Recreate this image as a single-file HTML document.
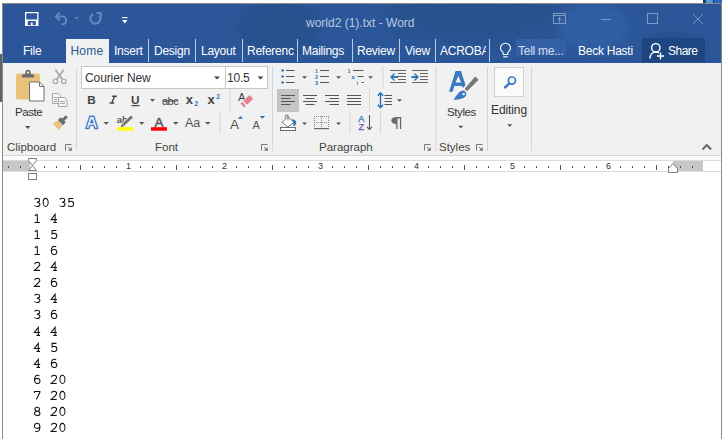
<!DOCTYPE html>
<html><head><meta charset="utf-8">
<style>
*{margin:0;padding:0;box-sizing:border-box}
html,body{width:722px;height:439px;overflow:hidden;background:#fff;font-family:"Liberation Sans",sans-serif}
.a{position:absolute}
.t{position:absolute;white-space:nowrap;line-height:1}
.tab{position:absolute;top:43.5px;color:#fff;font-size:12px;letter-spacing:-0.25px;white-space:nowrap;line-height:14px}
.sep{position:absolute;top:39px;width:1px;height:23px;background:#bccae2}
.gl{position:absolute;top:141px;font-size:11.5px;color:#444;line-height:13px;white-space:nowrap}
.lbl{position:absolute;font-size:12.5px;color:#333;line-height:14px;white-space:nowrap}
.rn{position:absolute;top:162px;font-size:9px;color:#333;line-height:9px}
.doc{position:absolute;left:34px;font-family:"Liberation Mono",monospace;font-size:14px;color:#000;line-height:16px;white-space:pre}
svg{position:absolute;left:0;top:0}
</style></head>
<body>
<!-- top background strip -->
<div class="a" style="left:703px;top:0;width:19px;height:3px;background:#2a6bb8"></div>
<div class="a" style="left:703px;top:0;width:3px;height:3px;background:#1a3a5a"></div>
<div class="a" style="left:706px;top:0;width:7px;height:3px;background:#5a9ad8"></div>
<div class="a" style="left:713px;top:0;width:1px;height:3px;background:#0f3a70"></div>
<!-- left dark strip -->
<div class="a" style="left:0;top:54px;width:2px;height:48px;background:#56646e"></div>
<!-- window frame -->
<div class="a" style="left:2px;top:3px;width:720px;height:436px;background:#8a8a8a"></div>
<!-- title bar -->
<div class="a" style="left:3px;top:4px;width:718px;height:59px;background:#2b579a;overflow:hidden">
  <div class="a" style="left:234px;top:-4px;width:84px;height:56px;border-radius:50%;background:#27518f;filter:blur(3px)"></div>
  <div class="a" style="left:380px;top:-20px;width:180px;height:60px;border-radius:50%;background:#28528f;filter:blur(8px)"></div>
  <div class="a" style="left:555px;top:0px;width:70px;height:45px;border-radius:50%;background:#3060a3;filter:blur(5px)"></div>
  <div class="a" style="left:640px;top:28px;width:60px;height:40px;border-radius:50%;background:#264e8c;filter:blur(4px)"></div>
</div>
<!-- ribbon -->
<div class="a" style="left:3px;top:63px;width:718px;height:92px;background:#f1f1f1"></div>
<div class="a" style="left:3px;top:155px;width:718px;height:1px;background:#d5d5d5"></div>
<div class="a" style="left:3px;top:156px;width:718px;height:4px;background:#fdfdfd"></div>
<!-- document area -->
<div class="a" style="left:3px;top:160px;width:718px;height:279px;background:#fff"></div>
<!-- ruler -->
<div class="a" style="left:3px;top:160px;width:718px;height:1px;background:#dcdcdc"></div>
<div class="a" style="left:3px;top:171px;width:718px;height:1px;background:#dcdcdc"></div>
<div class="a" style="left:3px;top:161px;width:27px;height:10px;background:#c6c6c6"></div>
<div class="a" style="left:673px;top:161px;width:30px;height:10px;background:#c6c6c6"></div>

<!-- title bar content -->
<div class="t" style="left:306px;top:17px;font-size:12px;color:#bac8df">world2 (1).txt - Word</div>

<!-- tabs -->
<div class="a" style="left:66px;top:39px;width:43px;height:24px;background:#f1f1f1"></div>
<div class="tab" style="left:23px">File</div>
<div class="tab" style="left:70.5px;color:#2b579a;letter-spacing:0.2px">Home</div>
<div class="tab" style="left:114px">Insert</div>
<div class="sep" style="left:148px"></div>
<div class="tab" style="left:154px">Design</div>
<div class="sep" style="left:195px"></div>
<div class="tab" style="left:201px">Layout</div>
<div class="sep" style="left:242px"></div>
<div class="tab" style="left:247px">Referenc</div>
<div class="sep" style="left:297px"></div>
<div class="tab" style="left:302px">Mailings</div>
<div class="sep" style="left:352px"></div>
<div class="tab" style="left:357px">Review</div>
<div class="sep" style="left:399px"></div>
<div class="tab" style="left:405px">View</div>
<div class="sep" style="left:435px"></div>
<div class="tab" style="left:440px;width:46px;overflow:hidden">ACROBAT</div>
<div class="sep" style="left:489px"></div>
<div class="a" style="left:516px;top:39px;width:50px;height:16px;background:#3461a6"></div>
<div class="tab" style="left:518px;color:#d5dff0">Tell me...</div>
<div class="tab" style="left:578px">Beck Hasti</div>
<div class="a" style="left:642px;top:38px;width:63px;height:24px;background:#1d4683"></div>
<div class="tab" style="left:668px;letter-spacing:-0.5px">Share</div>

<!-- ribbon labels -->
<div class="lbl" style="left:15px;top:105px;font-size:11.5px;letter-spacing:-0.45px">Paste</div>
<div class="lbl" style="left:447px;top:105px;font-size:11.5px;letter-spacing:-0.4px">Styles</div>
<div class="lbl" style="left:491px;top:103px;font-size:12px;letter-spacing:-0.1px">Editing</div>

<!-- group labels -->
<div class="gl" style="left:7px">Clipboard</div>
<div class="gl" style="left:155px">Font</div>
<div class="gl" style="left:319px">Paragraph</div>
<div class="gl" style="left:439px">Styles</div>

<!-- ruler numbers -->
<div class="rn" style="left:126px">1</div>
<div class="rn" style="left:222px">2</div>
<div class="rn" style="left:318px">3</div>
<div class="rn" style="left:414px">4</div>
<div class="rn" style="left:510px">5</div>
<div class="rn" style="left:606px">6</div>

<svg id="icons" width="722" height="439" viewBox="0 0 722 439">
<!-- QAT -->
<path fill="#fff" fill-rule="evenodd" d="M25 12h13.5v14h-13.5z M26.3 13.3h10.9v6.2h-10.9z M27.8 21h8v4.2h-8z"/>
<rect x="30.8" y="22.5" width="1.9" height="2.8" fill="#fff"/>
<g fill="none" stroke="#6586bd" stroke-width="2.1">
<path d="M56.5 16.5h5.8a3.9 3.9 0 0 1 0 7.8h-0.8"/>
<path d="M59.8 12.6l-3.9 3.9 3.9 3.9"/>
<path d="M99.6 16A5 5 0 1 1 93.2 14.1"/>
<path d="M96.4 13H100.8V17.4"/>
</g>
<path fill="#6586bd" d="M74 17.3h5l-2.5 2.2z"/>
<rect x="122" y="17" width="5.5" height="1.2" fill="#fff"/>
<path fill="#fff" d="M122 20h5.5l-2.75 3.5z"/>
<!-- window controls -->
<g fill="none" stroke="#8098c4" stroke-width="1">
<rect x="553.5" y="13.5" width="12" height="10"/>
<path d="M553.5 15.5h12"/>
<path d="M559.5 22.5v-5M557.5 19.5l2-2 2 2"/>
<path d="M601 19.5h10"/>
<rect x="647.5" y="13.5" width="10" height="10"/>
<path d="M693 14l10 10M703 14l-10 10"/>
</g>
<!-- tell me bulb -->
<g fill="none" stroke="#fff" stroke-width="1.1">
<path d="M503.2 54.5v-1.5c0-1.3-2.7-2.4-2.7-4.8a5 5 0 0 1 10 0c0 2.4-2.7 3.5-2.7 4.8v1.5z"/>
<path d="M503.3 56.8h4.4"/>
</g>
<!-- share icon -->
<g fill="none" stroke="#fff" stroke-width="1.4">
<circle cx="655.8" cy="47.8" r="4.2"/>
<path d="M650 58.5c0-4 2.5-6.5 6-6.5 1.2 0 2.2 .3 3 .8"/>
<path d="M660.5 52.5v7M657 56h7"/>
</g>

<!-- Clipboard group -->
<rect x="16" y="73.5" width="24" height="26" rx="2" fill="#e8c27b"/>
<path fill="#6b6b6b" d="M21.5 77.5l1-3.2h11l1 3.2z M25.3 74.5v-2a2.7 2.7 0 0 1 5.4 0v2z"/>
<circle cx="28" cy="72.6" r="1.1" fill="#f1f1f1"/>
<path fill="#fff" stroke="#707070" stroke-width="1" d="M29.5 82h10l4.5 4.5v14.5h-14.5z"/>
<path fill="none" stroke="#707070" stroke-width="1" d="M39.5 82v4.5h4.5"/>
<path fill="#555" d="M25 126h5.5l-2.75 3z"/>
<g fill="none" stroke="#a6a6a6" stroke-width="1.2">
<circle cx="55.4" cy="81.3" r="2.3"/>
<circle cx="63.8" cy="81.3" r="2.3"/>
</g>
<path fill="none" stroke="#a6a6a6" stroke-width="1.7" d="M56.8 79.3l7-9.6M62.4 79.3l-7-9.6"/>
<g fill="#f6f6f6" stroke="#a6a6a6" stroke-width="1">
<path d="M52.5 93.5h6l2 2v8h-8z"/>
<path d="M58.5 97.5h6l2.5 2.5v6.5h-8.5z"/>
</g>
<g stroke="#a6a6a6" stroke-width="1">
<path d="M54 97.5h4M54 99.5h3M54 101.5h3M60 101.5h5M60 103.5h5"/>
</g>
<path fill="#e8c27b" d="M57.84 120.49 L62.51 125.16 L59.18 130.32 L52.68 123.82z"/>
<path fill="#6b6b6b" d="M57.84 120.07 L60.67 117.24 L65.76 122.33 L62.93 125.16z M61.8 119.08 L65.69 115.19 L67.81 117.31 L63.92 121.2z"/>
<rect x="76" y="68" width="1" height="82" fill="#d6d6d6"/>

<!-- Font group -->
<rect x="81.5" y="66.5" width="186" height="22" fill="#fff" stroke="#c6c6c6"/>
<rect x="225" y="67" width="1" height="21" fill="#c6c6c6"/>
<path fill="#444" d="M214 76.5h6l-3 3z M257.5 76.5h6l-3 3z"/>
<g font-family="Liberation Sans" fill="#444">
<text x="87.3" y="103.6" font-size="11.8" font-weight="bold">B</text>
<path fill="none" stroke="#444" stroke-width="1.4" d="M112.2 96.3h4.6M109.6 103h4.6M114.6 96.3l-2.8 6.7"/>
<text x="131" y="103.6" font-size="11.8" font-weight="bold">U</text>
<text x="162" y="104.5" font-size="11" letter-spacing="-0.5">abc</text>
<text x="185.8" y="104.2" font-size="13" font-weight="bold">x</text>
<text x="207.6" y="104.2" font-size="13" font-weight="bold">x</text>
</g>
<rect x="131.5" y="105" width="8" height="1.2" fill="#444"/>
<rect x="162" y="100.5" width="16" height="1" fill="#444"/>
<text x="194.5" y="106.3" font-size="6.5" font-weight="bold" fill="#2e75b6" font-family="Liberation Sans">2</text>
<text x="216.3" y="98.5" font-size="6.5" font-weight="bold" fill="#2e75b6" font-family="Liberation Sans">2</text>
<path fill="#555" d="M150 99h5l-2.5 2.8z"/>
<rect x="229.5" y="89" width="1" height="22" fill="#d6d6d6"/>
<text x="238.3" y="101.3" font-size="10.5" fill="#333" font-family="Liberation Sans">A</text>
<path fill="#e57f93" stroke="#f1f1f1" stroke-width="0.6" d="M243.10 100.75 L249.57 94.79 L253.50 99.05 L247.03 105.01z M240.21 103.42 L242.27 101.52 L246.19 105.78 L244.13 107.68z"/>
<!-- row 2 -->
<path fill="#eaf1fa" fill-rule="evenodd" stroke="#b9d2ee" stroke-width="2.6" stroke-linejoin="round" d="M89.8 116.4H93.8L97.6 128.4H94.8L93.8 125.2H89.8L88.8 128.4H86Z M91.8 119.6L90.5 122.8H93.1Z"/>
<path fill="#eaf1fa" fill-rule="evenodd" stroke="#3a77be" stroke-width="1.1" stroke-linejoin="round" d="M89.8 116.4H93.8L97.6 128.4H94.8L93.8 125.2H89.8L88.8 128.4H86Z M91.8 119.6L90.5 122.8H93.1Z"/>
<path fill="#555" d="M103.5 122h5.5l-2.75 2.8z M139 122h5.5l-2.75 2.8z M173 122h5.5l-2.75 2.8z M205 122h5.5l-2.75 2.8z"/>
<text x="116.8" y="122.6" font-size="9.5" font-weight="bold" fill="#555" font-family="Liberation Sans">ab</text>
<path fill="none" stroke="#f1f1f1" stroke-width="4" d="M123.5 124.5l8.5-8"/>
<path fill="none" stroke="#707070" stroke-width="2.6" d="M123.5 124.5l8.5-8"/>
<path fill="#707070" d="M120.8 127.2l1.2-3.6 2.6 2.4z"/>
<rect x="117" y="127.2" width="16" height="3.5" fill="#ffff00"/>
<text x="154.5" y="126.8" font-size="13.5" fill="#555" stroke="#555" stroke-width="0.5" font-family="Liberation Sans">A</text>
<rect x="151" y="127.2" width="16" height="3.5" fill="#ff0000"/>
<text x="185" y="127" font-size="12.5" fill="#555" font-family="Liberation Sans">Aa</text>
<rect x="219.5" y="112" width="1" height="22" fill="#d6d6d6"/>
<text x="230" y="128.7" font-size="13.5" fill="#555" font-family="Liberation Sans">A</text>
<path fill="#2e75b6" d="M237.8 118.7h5.2l-2.6-2.6z"/>
<text x="252.5" y="128.7" font-size="11" fill="#555" font-family="Liberation Sans">A</text>
<path fill="#2e75b6" d="M259.7 116h5.5l-2.75 2.8z"/>
<rect x="272" y="66" width="1" height="85" fill="#d6d6d6"/>

<!-- Paragraph group -->
<g fill="#2e75b6">
<circle cx="282.6" cy="70.5" r="1.3"/><circle cx="282.6" cy="76.5" r="1.3"/><circle cx="282.6" cy="82.5" r="1.3"/>
</g>
<g stroke="#555" stroke-width="1.1">
<path d="M286 70.5h8.5M286 76.5h8.5M286 82.5h8.5"/>
<path d="M320 70.5h9M320 76.5h9M320 82.5h9"/>
<path d="M353 70.5h10.5M357.5 76.5h6M361.5 82.5h2.3"/>
</g>
<g font-family="Liberation Sans" font-weight="bold" font-size="5.5" fill="#2e75b6">
<text x="315" y="72.5">1</text><text x="315" y="78.6">2</text><text x="315" y="84.6">3</text>
<text x="347.5" y="72.5">1</text><text x="351.5" y="78.6">a</text><text x="356.5" y="84.6">i</text>
</g>
<path fill="#555" d="M302 76.2h5l-2.5 2.5z M336 76.2h5l-2.5 2.5z M368.3 76.2h4.7l-2.35 2.5z"/>
<rect x="382.5" y="66" width="1" height="21" fill="#d6d6d6"/>
<g stroke="#666" stroke-width="1.1">
<path d="M390 70.5h16M398 73.5h8M398 76.5h8M398 79.5h8M390 82.5h16"/>
<path d="M412 70.5h16M420 73.5h8M420 76.5h8M420 79.5h8M412 82.5h16"/>
</g>
<path fill="#2e75b6" d="M390 77l3.5-3.5h2l-2.5 2.5h5v2h-5l2.5 2.5h-2z"/>
<path fill="#2e75b6" d="M419 77l-3.5-3.5h-2l2.5 2.5h-4.5v2h4.5l-2.5 2.5h2z"/>
<rect x="435.5" y="67" width="1" height="84" fill="#d6d6d6"/>
<!-- align row -->
<rect x="277" y="89" width="22" height="23" fill="#c5c5c5"/>
<g stroke="#555" stroke-width="1.2">
<path d="M281 95.5h14M281 98.5h9.5M281 101.5h14M281 104.5h9.5"/>
<path d="M303 95.5h14M305.5 98.5h9M303 101.5h14M305.5 104.5h9"/>
<path d="M325 95.5h14M329.5 98.5h9.5M325 101.5h14M329.5 104.5h9.5"/>
<path d="M347 95.5h14M347 98.5h14M347 101.5h14M347 104.5h14"/>
</g>
<rect x="369" y="89" width="1" height="22" fill="#d6d6d6"/>
<g stroke="#555" stroke-width="1.2">
<path d="M384.5 95.5h7.5M384.5 98.5h7.5M384.5 101.5h7.5M384.5 104.5h7.5"/>
</g>
<path fill="none" stroke="#2e75b6" stroke-width="1.4" d="M380.5 93v14.5M377.8 95.8l2.7-2.9 2.7 2.9M377.8 104.7l2.7 2.9 2.7-2.9"/>
<path fill="#555" d="M397 99.2h5l-2.5 2.5z"/>
<!-- row 3 -->
<path fill="#2e75b6" d="M292 119.2c2.5.2 4.3 1.6 4.3 3.6 0 1.5-1.2 3-2.8 3.8l-.3-4.5z"/>
<g fill="#fff" stroke="#6e6e6e" stroke-width="1">
<rect x="280.5" y="127.5" width="15" height="3"/>
<path d="M282.2 122.3l5.7-5.7 5.8 5.8-5.8 4.6z"/>
</g>
<path fill="none" stroke="#6e6e6e" stroke-width="1" d="M288 120.5v-4.3a1.3 1.3 0 0 0-2.6 0v1.5"/>
<path fill="#555" d="M302 122.5h5l-2.5 2.5z M336 122.5h5l-2.5 2.5z"/>
<path fill="#8a8a8a" d="M314 116h1v1h-1zM321 116h1v1h-1zM328 116h1v1h-1zM314 118h1v1h-1zM321 118h1v1h-1zM328 118h1v1h-1zM314 120h1v1h-1zM321 120h1v1h-1zM328 120h1v1h-1zM314 122h1v1h-1zM321 122h1v1h-1zM328 122h1v1h-1zM314 124h1v1h-1zM321 124h1v1h-1zM328 124h1v1h-1zM314 126h1v1h-1zM321 126h1v1h-1zM328 126h1v1h-1zM314 128h1v1h-1zM321 128h1v1h-1zM328 128h1v1h-1zM316 116h1v1h-1zM316 122h1v1h-1zM318 116h1v1h-1zM318 122h1v1h-1zM320 116h1v1h-1zM320 122h1v1h-1zM322 116h1v1h-1zM322 122h1v1h-1zM324 116h1v1h-1zM324 122h1v1h-1zM326 116h1v1h-1zM326 122h1v1h-1z"/>
<rect x="314" y="128" width="15" height="1.2" fill="#666"/>
<rect x="349.5" y="111.5" width="1" height="22" fill="#d6d6d6"/>
<text x="358.3" y="121.6" font-size="9.2" fill="#2e75b6" stroke="#2e75b6" stroke-width="0.25" font-family="Liberation Sans">A</text>
<text x="358.6" y="129.8" font-size="9.2" fill="#7a4fa8" stroke="#7a4fa8" stroke-width="0.25" font-family="Liberation Sans">Z</text>
<g fill="none" stroke="#555" stroke-width="1.1">
<path d="M369.5 115v14.3M366.9 126.8l2.6 2.7 2.6-2.7"/>
</g>
<rect x="380" y="111.5" width="1" height="22" fill="#d6d6d6"/>
<path fill="#6a6a6a" d="M396.2 117H401.2V129H399.9V118.4H397.5V129H396.2V124C393.5 124 391.3 122.5 391.3 120.5S393.5 117 396.2 117z"/>

<!-- launchers -->
<g fill="none" stroke="#777" stroke-width="1">
<path d="M65.5 150.5v-6h6M68 147l3.5 3.5"/>
<path d="M261.5 150.5v-6h6M264 147l3.5 3.5"/>
<path d="M424.5 150.5v-6h6M427 147l3.5 3.5"/>
<path d="M476.5 150.5v-6h6M479 147l3.5 3.5"/>
</g>
<path fill="#777" d="M71.8 147v3.8h-3.8z M267.8 147v3.8h-3.8z M430.8 147v3.8h-3.8z M482.8 147v3.8h-3.8z"/>

<!-- Styles group -->
<path fill="#3b78bf" fill-rule="evenodd" d="M455.6 71H461L467.6 91.8H464L462.16 86H454.4L452.6 91.8H449Z M458.3 76L461.05 82.5H455.55Z"/>
<path fill="#f1f1f1" d="M462.14 88.87 L474.96 74.89 L480.26 79.75 L467.44 93.73z"/>
<path fill="#777" d="M464.55 89.05 L475.17 76.44 L478.70 79.68 L467.05 91.35z"/>
<path fill="#3b78bf" d="M453.5 99.8C456 96.5 458.3 91.8 462 90.8A3.6 3.6 0 0 1 466.2 95.2C464.5 98.6 459 99.8 453.5 99.8z"/>
<ellipse cx="463.6" cy="94.2" rx="1.4" ry="1.1" fill="#e8f0fa"/>
<path fill="#555" d="M458.2 125.8h5l-2.5 2.6z"/>
<rect x="487" y="67" width="1" height="84" fill="#d6d6d6"/>
<!-- Editing -->
<rect x="494.5" y="67.5" width="29" height="29" fill="#fbfbfb" stroke="#cfcfcf"/>
<g fill="none" stroke="#3a77be">
<circle cx="511.9" cy="80.6" r="3.6" stroke-width="1.7"/>
<path d="M509.3 83.4l-4.2 4" stroke-width="2.4" stroke-linecap="round"/>
</g>
<path fill="#555" d="M507.2 124.3h5l-2.5 2.6z"/>
<rect x="531" y="67" width="1" height="84" fill="#d6d6d6"/>
<!-- collapse chevron -->
<path fill="none" stroke="#666" stroke-width="1.9" d="M702.5 149.5l4.3-4.5 4.3 4.5"/>

<!-- ruler ticks -->
<g fill="#555" id="ticks"><rect x="8" y="166" width="1" height="2"/><rect x="20" y="166" width="1" height="2"/><rect x="44" y="166" width="1" height="2"/><rect x="56" y="166" width="1" height="2"/><rect x="68" y="166" width="1" height="2"/><rect x="80" y="165" width="1" height="5"/><rect x="92" y="166" width="1" height="2"/><rect x="104" y="166" width="1" height="2"/><rect x="116" y="166" width="1" height="2"/><rect x="140" y="166" width="1" height="2"/><rect x="152" y="166" width="1" height="2"/><rect x="164" y="166" width="1" height="2"/><rect x="176" y="165" width="1" height="5"/><rect x="188" y="166" width="1" height="2"/><rect x="200" y="166" width="1" height="2"/><rect x="212" y="166" width="1" height="2"/><rect x="236" y="166" width="1" height="2"/><rect x="248" y="166" width="1" height="2"/><rect x="260" y="166" width="1" height="2"/><rect x="272" y="165" width="1" height="5"/><rect x="284" y="166" width="1" height="2"/><rect x="296" y="166" width="1" height="2"/><rect x="308" y="166" width="1" height="2"/><rect x="332" y="166" width="1" height="2"/><rect x="344" y="166" width="1" height="2"/><rect x="356" y="166" width="1" height="2"/><rect x="368" y="165" width="1" height="5"/><rect x="380" y="166" width="1" height="2"/><rect x="392" y="166" width="1" height="2"/><rect x="404" y="166" width="1" height="2"/><rect x="428" y="166" width="1" height="2"/><rect x="440" y="166" width="1" height="2"/><rect x="452" y="166" width="1" height="2"/><rect x="464" y="165" width="1" height="5"/><rect x="476" y="166" width="1" height="2"/><rect x="488" y="166" width="1" height="2"/><rect x="500" y="166" width="1" height="2"/><rect x="524" y="166" width="1" height="2"/><rect x="536" y="166" width="1" height="2"/><rect x="548" y="166" width="1" height="2"/><rect x="560" y="165" width="1" height="5"/><rect x="572" y="166" width="1" height="2"/><rect x="584" y="166" width="1" height="2"/><rect x="596" y="166" width="1" height="2"/><rect x="620" y="166" width="1" height="2"/><rect x="632" y="166" width="1" height="2"/><rect x="644" y="166" width="1" height="2"/><rect x="656" y="165" width="1" height="5"/><rect x="668" y="166" width="1" height="2"/><rect x="680" y="166" width="1" height="2"/><rect x="692" y="166" width="1" height="2"/></g>
<!-- indent markers -->
<g fill="#fff" stroke="#7f7f7f" stroke-width="1">
<path d="M28.5 158.5H36.5V160.5L32.5 165.5L36.5 170.5H28.5L32.5 165.5L28.5 160.5Z"/>
<rect x="28.5" y="173.5" width="8" height="6"/>
<path d="M668.5 172.5v-4l4.5-5 4.5 5v4z"/>
</g>
</svg>

<div class="t" style="left:85px;top:72px;font-size:12px;color:#333;letter-spacing:-0.1px">Courier New</div>
<div class="t" style="left:227px;top:72px;font-size:12px;color:#333;letter-spacing:-0.2px">10.5</div>
<!-- document text -->
<svg id="doc" width="722" height="439" viewBox="0 0 722 439"><defs><g id="g0"><ellipse cx="4.25" cy="-4.5" rx="2.5" ry="4.05"/></g><g id="g1"><path d="M4.3,-8.6V-0.5M1.5,-0.5H7M4.3,-8.6L1.7,-7.2"/></g><g id="g2"><path d="M1.6,-6.6C1.8,-8 2.9,-8.6 4.2,-8.6C5.7,-8.6 6.8,-7.6 6.8,-6.3C6.8,-4.6 4.8,-3.5 1.5,-0.5H6.9"/></g><g id="g3"><path d="M1.6,-7.6C2.2,-8.3 3.1,-8.6 4.1,-8.6C5.6,-8.6 6.6,-7.7 6.6,-6.6C6.6,-5.4 5.5,-4.6 3.8,-4.6C5.6,-4.6 6.9,-3.6 6.9,-2.4C6.9,-1.2 5.7,-0.4 4,-0.4C2.9,-0.4 2,-0.7 1.3,-1.4"/></g><g id="g4"><path d="M5.3,-0.5V-8.6L1.3,-3.3H7.2M3.5,-0.5H7.0"/></g><g id="g5"><path d="M6.6,-8.5H2.3V-4.9C3,-5.4 3.7,-5.6 4.4,-5.6C5.9,-5.6 7,-4.6 7,-3C7,-1.4 5.8,-0.4 4.2,-0.4C3,-0.4 2,-0.8 1.3,-1.4"/></g><g id="g6"><path d="M6.4,-8.2C5.8,-8.5 5.1,-8.6 4.5,-8.6C2.6,-8.6 1.5,-6.8 1.5,-4.2C1.5,-1.8 2.6,-0.4 4.3,-0.4C5.9,-0.4 7,-1.5 7,-3C7,-4.5 5.9,-5.5 4.4,-5.5C3.1,-5.5 2,-4.8 1.5,-3.8"/></g><g id="g7"><path d="M1.5,-7V-8.5H6.9V-7.6L3.4,-0.4"/></g><g id="g8"><path d="M4.2,-4.6C2.8,-4.6 1.9,-5.5 1.9,-6.6C1.9,-7.8 2.9,-8.6 4.2,-8.6C5.5,-8.6 6.5,-7.8 6.5,-6.6C6.5,-5.5 5.6,-4.6 4.2,-4.6C2.6,-4.6 1.5,-3.6 1.5,-2.5C1.5,-1.2 2.7,-0.4 4.2,-0.4C5.7,-0.4 6.9,-1.2 6.9,-2.5C6.9,-3.6 5.8,-4.6 4.2,-4.6Z"/></g><g id="g9"><path d="M2,-0.8C2.6,-0.5 3.3,-0.4 3.9,-0.4C5.8,-0.4 6.9,-2.2 6.9,-4.8C6.9,-7.2 5.8,-8.6 4.1,-8.6C2.5,-8.6 1.4,-7.5 1.4,-6C1.4,-4.5 2.5,-3.5 4,-3.5C5.3,-3.5 6.4,-4.2 6.9,-5.2"/></g></defs><g fill="none" stroke="#111" stroke-width="1.05"><use href="#g3" x="33.0" y="206.9"/><use href="#g0" x="41.4" y="206.9"/><use href="#g3" x="58.2" y="206.9"/><use href="#g5" x="66.6" y="206.9"/><use href="#g1" x="33.0" y="222.9"/><use href="#g4" x="49.8" y="222.9"/><use href="#g1" x="33.0" y="238.9"/><use href="#g5" x="49.8" y="238.9"/><use href="#g1" x="33.0" y="254.9"/><use href="#g6" x="49.8" y="254.9"/><use href="#g2" x="33.0" y="270.9"/><use href="#g4" x="49.8" y="270.9"/><use href="#g2" x="33.0" y="286.9"/><use href="#g6" x="49.8" y="286.9"/><use href="#g3" x="33.0" y="302.9"/><use href="#g4" x="49.8" y="302.9"/><use href="#g3" x="33.0" y="318.9"/><use href="#g6" x="49.8" y="318.9"/><use href="#g4" x="33.0" y="335.9"/><use href="#g4" x="49.8" y="335.9"/><use href="#g4" x="33.0" y="351.9"/><use href="#g5" x="49.8" y="351.9"/><use href="#g4" x="33.0" y="367.9"/><use href="#g6" x="49.8" y="367.9"/><use href="#g6" x="33.0" y="383.9"/><use href="#g2" x="49.8" y="383.9"/><use href="#g0" x="58.2" y="383.9"/><use href="#g7" x="33.0" y="399.9"/><use href="#g2" x="49.8" y="399.9"/><use href="#g0" x="58.2" y="399.9"/><use href="#g8" x="33.0" y="415.9"/><use href="#g2" x="49.8" y="415.9"/><use href="#g0" x="58.2" y="415.9"/><use href="#g9" x="33.0" y="431.9"/><use href="#g2" x="49.8" y="431.9"/><use href="#g0" x="58.2" y="431.9"/></g></svg>
</body></html>
